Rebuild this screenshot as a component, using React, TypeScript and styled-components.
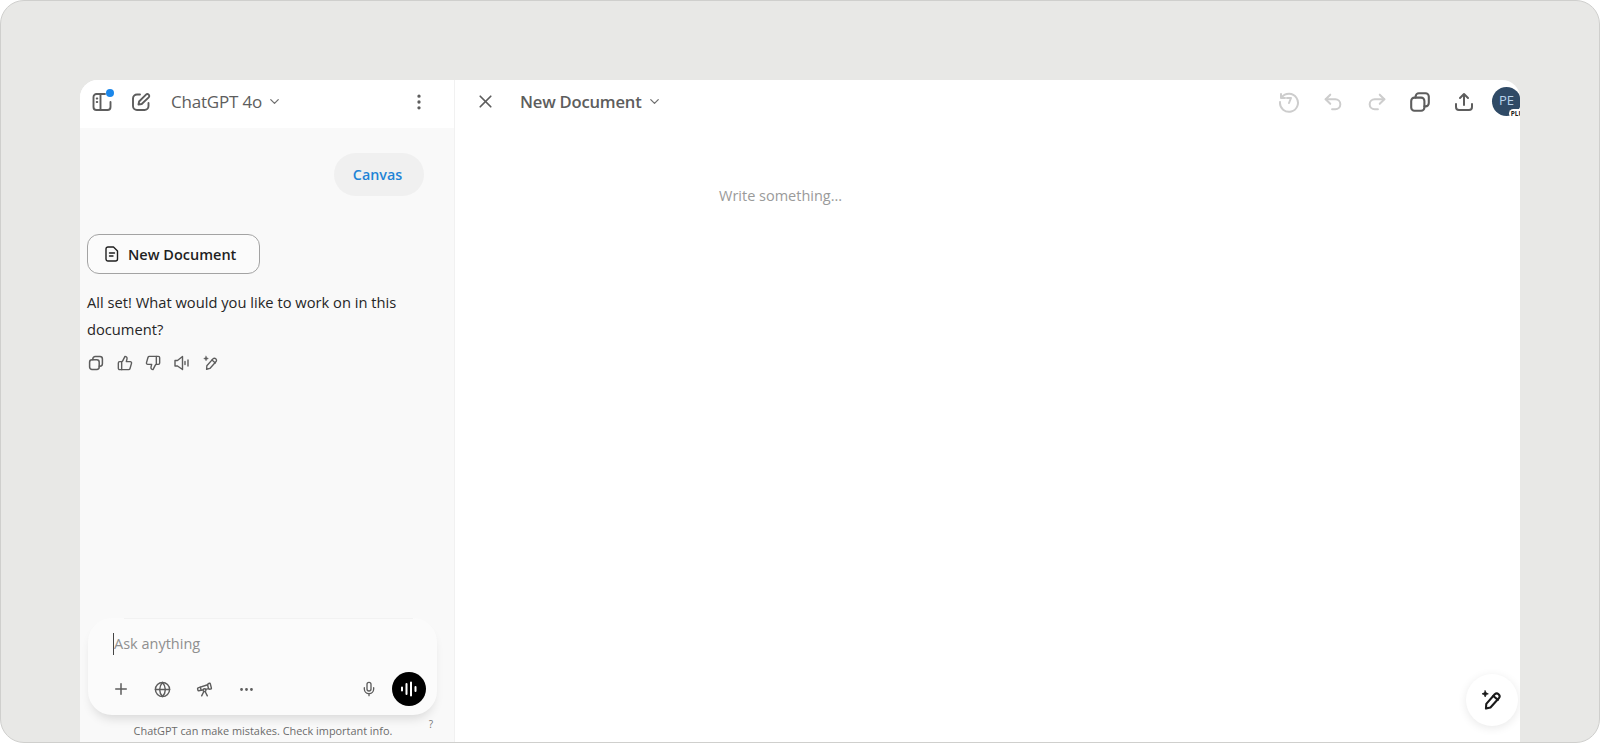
import React from 'react'
import styled, { createGlobalStyle } from 'styled-components'
import {
  ChevronDown,
  Ellipsis,
  EllipsisVertical,
  Globe,
  Mic,
  Plus,
  Redo2,
  Telescope,
  ThumbsDown,
  ThumbsUp,
  Undo2,
  X,
} from 'lucide-react'

const GlobalStyle = createGlobalStyle`
  html, body {
    margin: 0;
    padding: 0;
    background: #fff;
    font-family: "Open Sans", "Noto Sans", "Liberation Sans", sans-serif;
  }
  * { box-sizing: border-box; }
`

const Frame = styled.div`
  width: 1600px;
  height: 743px;
  padding: 79px 79px 0;
  background: #e8e8e6;
  border: 1px solid #cfcfcd;
  border-radius: 24px;
  overflow: hidden;
`

const Card = styled.div`
  display: flex;
  height: 100%;
  background: #fff;
  border-radius: 18px 18px 0 0;
  overflow: hidden;
`

const Sidebar = styled.aside`
  display: flex;
  flex-direction: column;
  width: 375px;
  flex-shrink: 0;
  background: #f9f9f9;
  border-right: 1px solid #f1f1f1;
`

const SideHeader = styled.div`
  display: flex;
  align-items: center;
  height: 48px;
  padding: 0 25px 5px 11px;
  background: #fff;
  color: #5d5d5d;
`

const IconSlot = styled.span<{ $left?: number }>`
  position: relative;
  display: inline-flex;
  margin-left: ${(p) => p.$left ?? 0}px;
  flex-shrink: 0;
`

const BlueDot = styled.span`
  position: absolute;
  top: -2px;
  right: -1px;
  width: 8px;
  height: 8px;
  border-radius: 50%;
  background: #1b87ea;
`

const ModelName = styled.span<{ $left: number }>`
  margin-left: ${(p) => p.$left}px;
  font-size: 17px;
  font-weight: 500;
  letter-spacing: -0.2px;
  color: #5d5d5d;
  white-space: nowrap;
`

const Chevron = styled(ChevronDown)`
  margin-left: 5px;
  color: #6f6f6f;
`

const Spacer = styled.div`
  flex: 1;
`

const Thread = styled.div`
  flex: 1;
  padding: 25px 7px 0;
`

const BubbleRow = styled.div`
  display: flex;
  justify-content: flex-end;
  padding-right: 23px;
`

const Bubble = styled.div`
  display: flex;
  align-items: center;
  justify-content: center;
  width: 90px;
  height: 43px;
  padding-right: 3px;
  border-radius: 22px;
  background: #f0f0f0;
  color: #1f84d6;
  font-size: 14.3px;
  font-weight: 600;
`

const DocButton = styled.div`
  display: flex;
  align-items: center;
  gap: 9px;
  width: 173px;
  height: 40px;
  margin-top: 38px;
  padding-left: 17px;
  border: 1px solid #a3a3a3;
  border-radius: 12px;
  color: #1f1f1f;
  font-size: 14.5px;
  font-weight: 600;
  white-space: nowrap;
  background: #fbfbfb;
`

const Message = styled.p`
  margin: 15px 0 0;
  width: 320px;
  font-size: 14.7px;
  line-height: 27px;
  color: #262626;
`

const Actions = styled.div`
  display: flex;
  align-items: center;
  gap: 12.7px;
  margin-top: 12px;
  padding-left: 1px;
  color: #5d5d5d;
`

const Composer = styled.div`
  position: relative;
  display: flex;
  flex-direction: column;
  width: 349px;
  height: 97px;
  margin-left: 8px;
  padding: 15px 11px 9px 25px;
  border-radius: 24px;
  background: #fbfbfb;
  box-shadow: 0 7px 11px -4px rgba(0, 0, 0, 0.14);

  &::before {
    content: '';
    position: absolute;
    top: 0;
    left: 36px;
    right: 24px;
    height: 1px;
    background: #f2f2f2;
  }
`

const Placeholder = styled.div`
  height: 22px;
  border-left: 1px solid #444;
  font-size: 14.5px;
  line-height: 22px;
  color: #8f8f8f;
`

const ComposerRow = styled.div`
  display: flex;
  align-items: center;
  margin-top: auto;
  margin-left: -1px;
  color: #5d5d5d;
`

const ToolIcon = styled.span<{ $left?: number }>`
  display: inline-flex;
  margin-left: ${(p) => p.$left ?? 0}px;
`

const VoiceButton = styled.span`
  display: flex;
  align-items: center;
  justify-content: center;
  width: 34px;
  height: 34px;
  margin-left: 15px;
  border-radius: 50%;
  background: #000;
`

const FinePrint = styled.div`
  position: relative;
  height: 27px;
  padding: 9px 8px 0 0;
  text-align: center;
  font-size: 10.9px;
  line-height: 14px;
  color: #6b6b6b;
  white-space: nowrap;
`

const HelpMark = styled.span`
  position: absolute;
  top: 2px;
  right: 21px;
  font-size: 10px;
  color: #777;
`

const Editor = styled.main`
  position: relative;
  flex: 1;
  min-width: 0;
`

const EditorHeader = styled.div`
  display: flex;
  align-items: center;
  height: 48px;
  padding: 0 0 5px 20px;
  color: #5d5d5d;
`

const DocTitle = styled.span`
  margin-left: 24px;
  font-size: 16.6px;
  font-weight: 600;
  letter-spacing: -0.2px;
  color: #5d5d5d;
  white-space: nowrap;
`

const HeaderTool = styled.span<{ $muted?: boolean; $left: number }>`
  display: inline-flex;
  margin-left: ${(p) => p.$left}px;
  color: ${(p) => (p.$muted ? '#cdcdcd' : '#5d5d5d')};
`

const Avatar = styled.span`
  position: relative;
  display: flex;
  justify-content: center;
  flex-shrink: 0;
  width: 29px;
  height: 29px;
  margin-left: 17px;
  margin-right: -1px;
  padding-top: 6px;
  border-radius: 50%;
  background: #2f4a66;
  color: #b9d3ec;
  font-size: 13px;
  line-height: 15px;
`

const PlusBadge = styled.span`
  position: absolute;
  right: -8px;
  bottom: -2px;
  padding: 0 2px;
  border-radius: 5px;
  background: #fff;
  color: #222;
  font-size: 6.5px;
  font-weight: 700;
  line-height: 9px;
`

const EditorPlaceholder = styled.div`
  margin: 58px 0 0 264px;
  font-size: 14.5px;
  line-height: 20px;
  color: #9a9a9a;
`

const Fab = styled.span`
  position: absolute;
  right: 2px;
  bottom: 16px;
  display: flex;
  align-items: center;
  justify-content: center;
  width: 52px;
  height: 52px;
  border-radius: 50%;
  background: #fff;
  color: #1a1a1a;
  box-shadow: 0 2px 10px rgba(0, 0, 0, 0.09);
`

const SidebarIcon = () => (
  <svg width="22" height="22" viewBox="0 0 22 22" fill="none" stroke="currentColor" strokeWidth="1.9" strokeLinecap="round">
    <path d="M14 3H5.500A3 3 0 0 0 2.500 6v10a3 3 0 0 0 3 3h11a3 3 0 0 0 3-3v-5" />
    <path d="M9.500 3v16" />
    <path d="M5.700 7.500h.6M5.700 11h.6" />
  </svg>
)

const EditIcon = () => (
  <svg width="22" height="22" viewBox="0 0 22 22" fill="none" stroke="currentColor" strokeWidth="1.9" strokeLinecap="round" strokeLinejoin="round">
    <path d="M10 3.500H7a4 4 0 0 0-4 4v7.500a4 4 0 0 0 4 4h7.500a4 4 0 0 0 4-4V12" />
    <path d="M8.500 13.500l.6-3L16 3.600a1.900 1.900 0 0 1 2.700 2.700L11.700 13z" />
  </svg>
)

const DocIcon = () => (
  <svg width="14" height="16" viewBox="0 0 14 16" fill="none" stroke="#1f1f1f" strokeWidth="1.4" strokeLinecap="round" strokeLinejoin="round">
    <path d="M3 1h5.500L12.500 5v8a2 2 0 0 1-2 2H3a2 2 0 0 1-2-2V3a2 2 0 0 1 2-2z" />
    <path d="M4.500 7h5M4.500 10h3.500" />
  </svg>
)

// front square bottom-left, back square peeking out top-right
const CopyIcon = ({ size, weight }: { size: number; weight: number }) => (
  <svg width={size} height={size} viewBox="0 0 20 20" fill="none" stroke="currentColor" strokeWidth={weight} strokeLinecap="round" strokeLinejoin="round">
    <rect x="2" y="6" width="12" height="12" rx="3" />
    <path d="M6 6V5a3 3 0 0 1 3-3h6a3 3 0 0 1 3 3v6a3 3 0 0 1-3 3h-1" />
  </svg>
)

const SpeakerIcon = () => (
  <svg width="16" height="16" viewBox="0 0 16 16" fill="none" stroke="currentColor" strokeWidth="1.4" strokeLinecap="round" strokeLinejoin="round">
    <path d="M1 5.500v5.500h2.500L8.500 14.500V1.500L3.500 5.500z" />
    <path d="M11 6.500v3M14 5v6" />
  </svg>
)

const SparklePen = ({ size, weight }: { size: number; weight: number }) => (
  <svg width={size} height={size} viewBox="0 0 20 20" fill="none" stroke="currentColor" strokeWidth={weight} strokeLinecap="round" strokeLinejoin="round">
    <path d="M4.500 17.800l.3-4.300 7.700-8.700a2.600 2.600 0 0 1 3.900 3.400l-7.800 8.600z" />
    <path d="M11.200 6.300l4.200 3.600" />
    <path d="M3.800 1.500l.9 2 2 .9-2 .9-.9 2-.9-2-2-.9 2-.9z" fill="currentColor" strokeWidth="0.6" />
  </svg>
)

const VoiceBars = () => (
  <svg width="18" height="18" viewBox="0 0 18 18" stroke="#fff" strokeWidth="2" strokeLinecap="round">
    <path d="M2 7.500v3M6.500 4v10M11 2.500v13M15.500 7v4" />
  </svg>
)

const HistoryIcon = () => (
  <svg width="22" height="22" viewBox="0 0 22 22" fill="none" stroke="currentColor" strokeWidth="2" strokeLinecap="round" strokeLinejoin="round">
    <path d="M3.700 6.500A9 9 0 1 1 2 11" />
    <path d="M3 3v4h4" />
    <path d="M9 7h4l-2 5" />
  </svg>
)

const ShareIcon = () => (
  <svg width="22" height="22" viewBox="0 0 22 22" fill="none" stroke="currentColor" strokeWidth="2" strokeLinecap="round" strokeLinejoin="round">
    <path d="M11 14V3M7 7l4-4 4 4" />
    <path d="M3 13v3a3 3 0 0 0 3 3h10a3 3 0 0 0 3-3v-3" />
  </svg>
)

const App: React.FC = () => {
  return (
    <>
      <GlobalStyle />
      <Frame>
        <Card>
          <Sidebar>
            <SideHeader>
              <IconSlot>
                <SidebarIcon />
                <BlueDot />
              </IconSlot>
              <IconSlot $left={17}>
                <EditIcon />
              </IconSlot>
              <ModelName $left={19}>ChatGPT 4o</ModelName>
              <Chevron size={15} />
              <Spacer />
              <EllipsisVertical size={20} />
            </SideHeader>
            <Thread>
              <BubbleRow>
                <Bubble>Canvas</Bubble>
              </BubbleRow>
              <DocButton>
                <DocIcon />
                New Document
              </DocButton>
              <Message>All set! What would you like to work on in this document?</Message>
              <Actions>
                <CopyIcon size={16} weight={1.9} />
                <ThumbsUp size={16} strokeWidth={2.1} />
                <ThumbsDown size={16} strokeWidth={2.1} />
                <SpeakerIcon />
                <SparklePen size={16} weight={1.7} />
              </Actions>
            </Thread>
            <Composer>
              <Placeholder>Ask anything</Placeholder>
              <ComposerRow>
                <Plus size={18} />
                <ToolIcon $left={24}>
                  <Globe size={17} />
                </ToolIcon>
                <ToolIcon $left={25}>
                  <Telescope size={17} />
                </ToolIcon>
                <ToolIcon $left={25}>
                  <Ellipsis size={17} />
                </ToolIcon>
                <Spacer />
                <Mic size={16} />
                <VoiceButton>
                  <VoiceBars />
                </VoiceButton>
              </ComposerRow>
            </Composer>
            <FinePrint>
              ChatGPT can make mistakes. Check important info.
              <HelpMark>?</HelpMark>
            </FinePrint>
          </Sidebar>
          <Editor>
            <EditorHeader>
              <X size={21} />
              <DocTitle>New Document</DocTitle>
              <Chevron size={15} />
              <Spacer />
              <HeaderTool $muted $left={0}>
                <HistoryIcon />
              </HeaderTool>
              <HeaderTool $muted $left={22}>
                <Undo2 size={22} strokeWidth={2.2} />
              </HeaderTool>
              <HeaderTool $muted $left={22}>
                <Redo2 size={22} strokeWidth={2.2} />
              </HeaderTool>
              <HeaderTool $left={21}>
                <CopyIcon size={22} weight={1.9} />
              </HeaderTool>
              <HeaderTool $left={22}>
                <ShareIcon />
              </HeaderTool>
              <Avatar>
                PE
                <PlusBadge>PLUS</PlusBadge>
              </Avatar>
            </EditorHeader>
            <EditorPlaceholder>Write something...</EditorPlaceholder>
            <Fab>
              <SparklePen size={22} weight={1.9} />
            </Fab>
          </Editor>
        </Card>
      </Frame>
    </>
  )
}

export default App
